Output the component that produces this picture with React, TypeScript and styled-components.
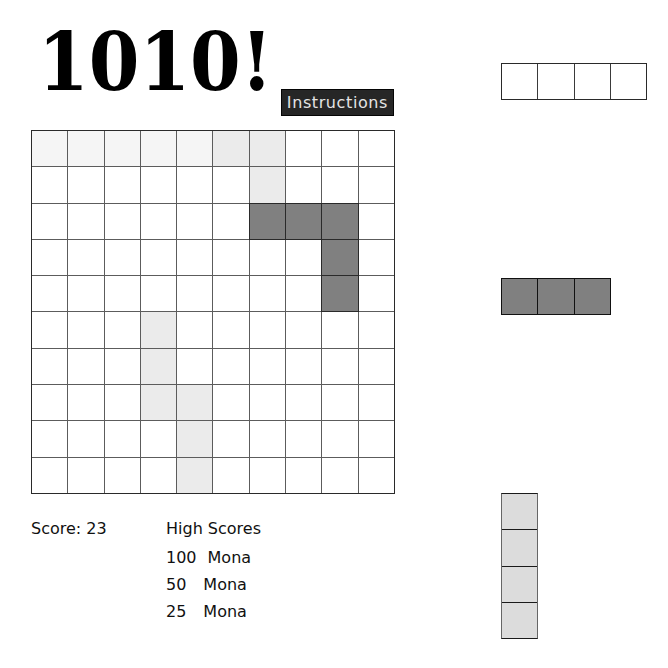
import React from 'react';
import styled, { createGlobalStyle } from 'styled-components';

const GlobalStyle = createGlobalStyle`
  body {
    margin: 0;
    background: #fff;
    font-family: "DejaVu Sans", "Liberation Sans", sans-serif;
    color: #111;
  }
`;

const Page = styled.div`
  display: flex;
  align-items: flex-start;
  padding-left: 31px;
`;

const LeftColumn = styled.div`
  width: 364px;
`;

const Header = styled.div`
  display: flex;
  justify-content: space-between;
  height: 116px;
  padding-top: 22px;
  box-sizing: border-box;
`;

const Title = styled.h1`
  margin: 0 0 0 7px;
  font-family: "DejaVu Serif Condensed", "DejaVu Serif", "Liberation Serif", serif;
  font-weight: bold;
  font-size: 81px;
  line-height: 80px;
  letter-spacing: 0px;
  color: #000;
`;

const InstructionsButton = styled.button`
  align-self: flex-end;
  height: 27px;
  padding: 0 5px;
  margin-right: 1px;
  background: #262626;
  border: 1px solid #050505;
  color: #e4e4e4;
  font-family: "DejaVu Sans", sans-serif;
  font-size: 16px;
  letter-spacing: 0.6px;
  line-height: 25px;
  cursor: pointer;
`;

const Board = styled.div`
  display: grid;
  grid-template-columns: repeat(10, 1fr);
  grid-template-rows: repeat(10, 1fr);
  gap: 1px;
  width: 364px;
  height: 364px;
  margin-top: 14px;
  box-sizing: border-box;
  background: #5c5c5c;
  border: 1px solid #2a2a2a;
`;

type Tone = 'empty' | 'faint' | 'light' | 'dark';

const tones: Record<Tone, string> = {
  empty: '#ffffff',
  faint: '#f5f5f5',
  light: '#ebebeb',
  dark: '#808080',
};

const Cell = styled.div<{ $tone: Tone }>`
  background: ${p => tones[p.$tone]};
  ${p => p.$tone === 'dark' && `
    position: relative;
    z-index: 1;
    box-shadow: 0 0 0 1px #2a2a2a;
  `}
`;

const ScoreArea = styled.div`
  display: flex;
  margin-top: 21px;
  font-size: 16px;
  line-height: 27px;
`;

const ScoreLabel = styled.div`
  width: 135px;
`;

const HighScores = styled.div`
  display: flex;
  flex-direction: column;
`;

const HighScoreList = styled.div`
  margin-top: 2px;
`;

const HighScoreRow = styled.div`
  display: flex;
`;

const Name = styled.span<{ $gap: number }>`
  margin-left: ${p => p.$gap}px;
`;

const RightColumn = styled.div`
  display: grid;
  grid-template-rows: 215px 215px auto;
  align-items: start;
  margin-left: 106px;
  padding-top: 63px;
`;

const Piece = styled.div<{ $cols: number; $rows: number; $fill: string; $line: string; $edge: string }>`
  display: grid;
  grid-template-columns: repeat(${p => p.$cols}, 35.3px);
  grid-template-rows: repeat(${p => p.$rows}, 35.3px);
  gap: 1px;
  width: max-content;
  background: ${p => p.$line};
  border: 1px solid;
  border-color: ${p => p.$edge};
  div {
    background: ${p => p.$fill};
  }
`;

const boardLayout: Tone[][] = (() => {
  const rows: Tone[][] = Array.from({ length: 10 }, () => Array(10).fill('empty'));
  for (let c = 0; c < 5; c++) rows[0][c] = 'faint';
  rows[0][5] = 'light';
  rows[0][6] = 'light';
  rows[1][6] = 'light';
  rows[2][6] = 'dark';
  rows[2][7] = 'dark';
  rows[2][8] = 'dark';
  rows[3][8] = 'dark';
  rows[4][8] = 'dark';
  rows[5][3] = 'light';
  rows[6][3] = 'light';
  rows[7][3] = 'light';
  rows[7][4] = 'light';
  rows[8][4] = 'light';
  rows[9][4] = 'light';
  return rows;
})();

const highScores = [
  { score: '100', name: 'Mona', gap: 11 },
  { score: '50', name: 'Mona', gap: 17 },
  { score: '25', name: 'Mona', gap: 17 },
];

const pieces = [
  { cols: 4, rows: 1, fill: '#ffffff', line: '#3a3a3a', edge: '#2a2a2a' },
  { cols: 3, rows: 1, fill: '#808080', line: '#111', edge: '#111' },
  { cols: 1, rows: 4, fill: '#dcdcdc', line: '#1a1a1a', edge: '#1a1a1a #666' },
];

const App: React.FC = () => (
  <>
    <GlobalStyle />
    <Page>
      <LeftColumn>
        <Header>
          <Title>1010!</Title>
          <InstructionsButton>Instructions</InstructionsButton>
        </Header>
        <Board>
          {boardLayout.flatMap((row, r) =>
            row.map((tone, c) => <Cell key={`${r}-${c}`} $tone={tone} />)
          )}
        </Board>
        <ScoreArea>
          <ScoreLabel>Score: 23</ScoreLabel>
          <HighScores>
            <div>High Scores</div>
            <HighScoreList>
              {highScores.map(h => (
                <HighScoreRow key={h.score}>
                  <span>{h.score}</span>
                  <Name $gap={h.gap}>{h.name}</Name>
                </HighScoreRow>
              ))}
            </HighScoreList>
          </HighScores>
        </ScoreArea>
      </LeftColumn>
      <RightColumn>
        {pieces.map((p, i) => (
          <Piece key={i} $cols={p.cols} $rows={p.rows} $fill={p.fill} $line={p.line} $edge={p.edge}>
            {Array.from(Array(p.cols * p.rows).keys()).map(k => <div key={k} />)}
          </Piece>
        ))}
      </RightColumn>
    </Page>
  </>
);

export default App;
